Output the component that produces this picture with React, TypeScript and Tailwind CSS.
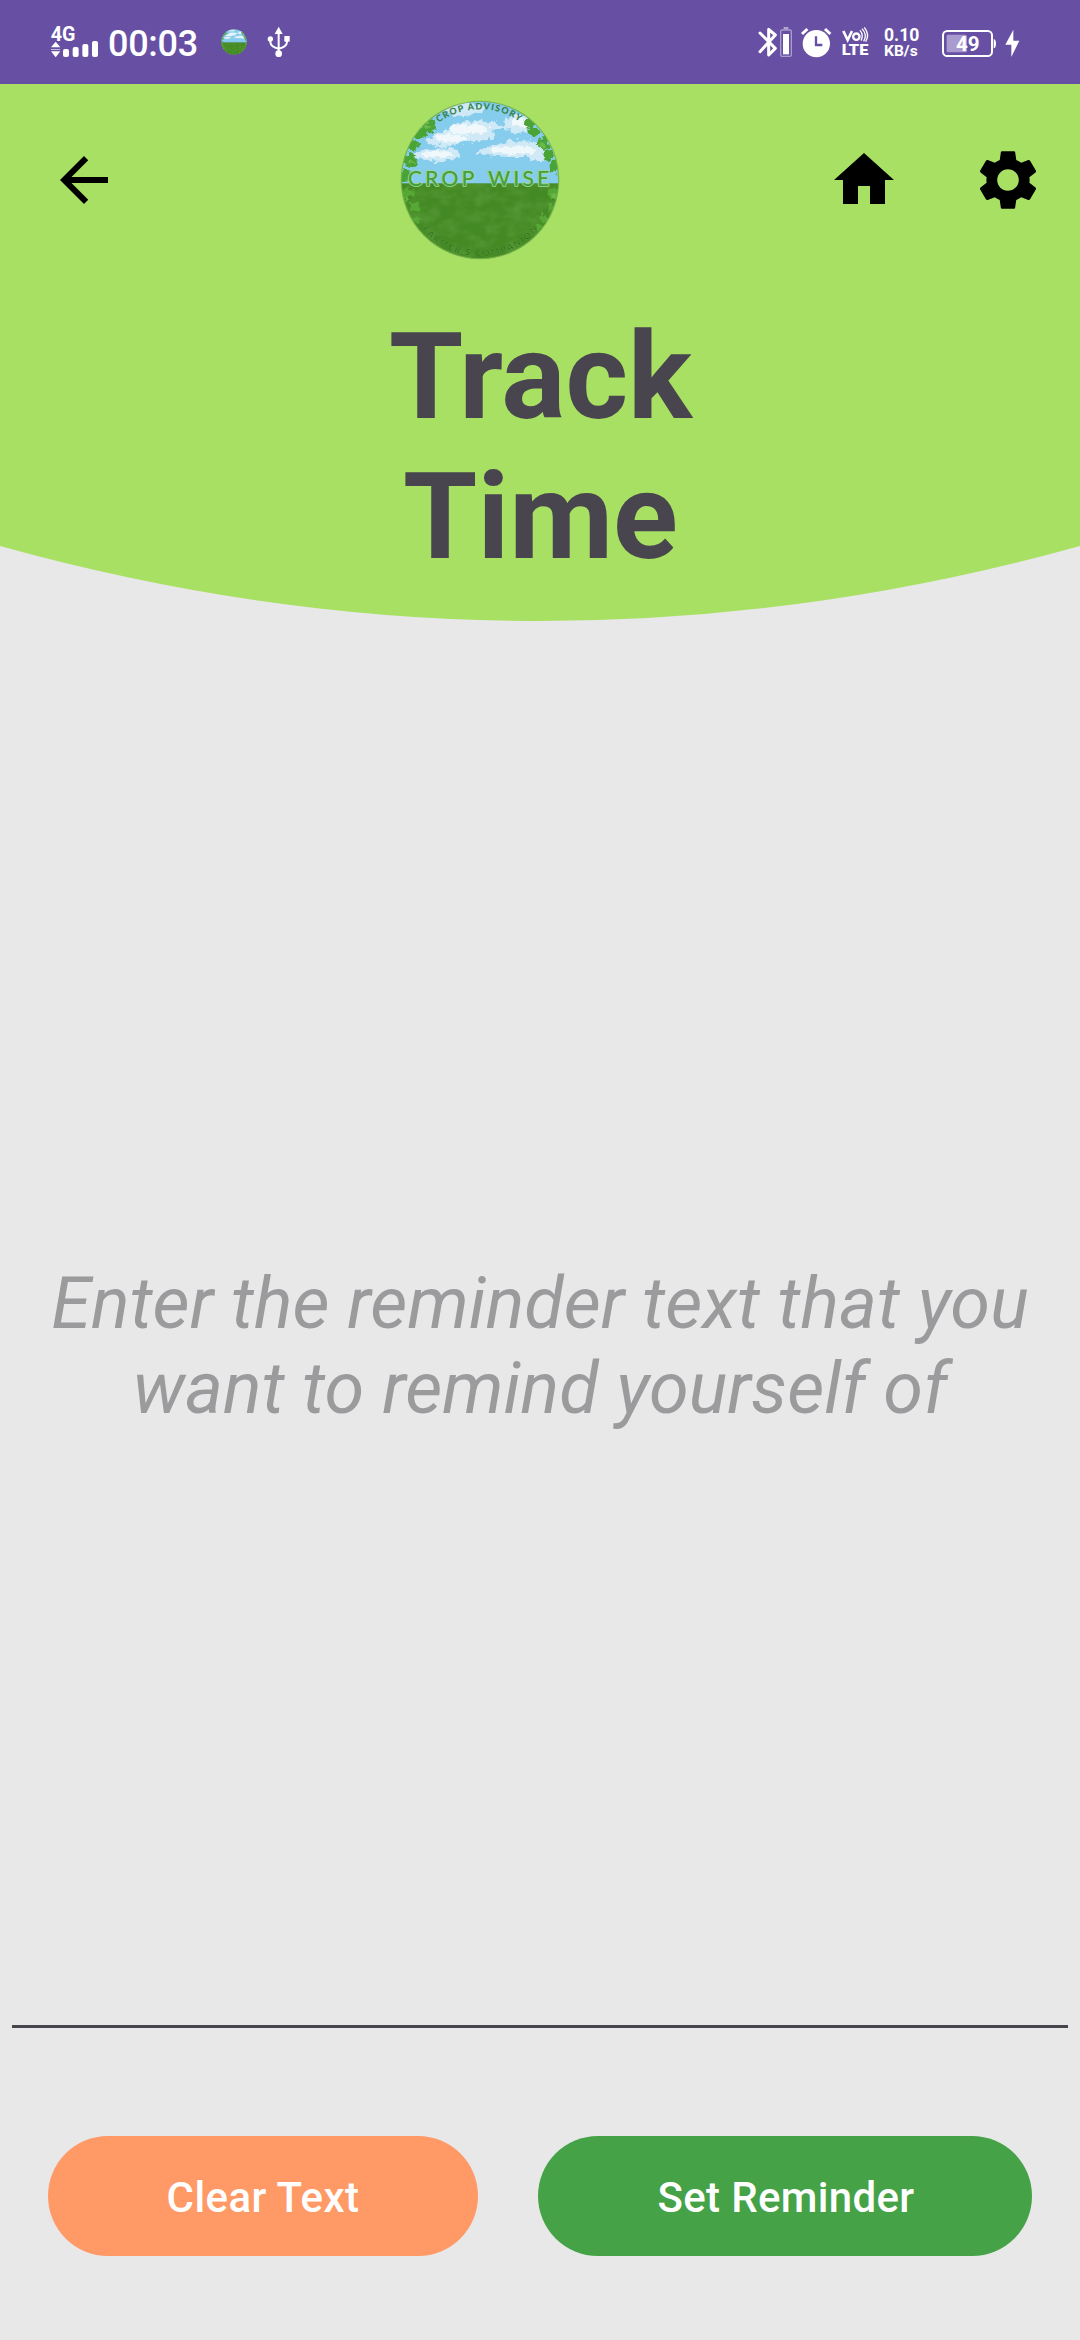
import React from "react";

function CropWiseLogo({ id, className, labelled = false }: { id: string; className: string; labelled?: boolean }) {
  return (
    <svg viewBox="30 30 480 480" className={className}>
      <defs>
        <clipPath id={`${id}-clip`}>
          <circle cx="270" cy="270" r="236" />
        </clipPath>
        <filter id={`${id}-rough`} x="-20%" y="-20%" width="140%" height="140%">
          <feTurbulence type="fractalNoise" baseFrequency="0.06" numOctaves="3" seed="4" />
          <feDisplacementMap in="SourceGraphic" scale="26" xChannelSelector="R" yChannelSelector="G" />
        </filter>
        <filter id={`${id}-grass`} x="0" y="0" width="100%" height="100%">
          <feTurbulence type="fractalNoise" baseFrequency="0.02 0.03" numOctaves="3" seed="8" />
          <feColorMatrix values="0 0 0 0 0.16  0 0 0 0 0.42  0 0 0 0 0.08  1.6 0 0 0 -0.6" />
        </filter>
        <path id={`${id}-top`} d="M57 270a213 212 0 0 1 426 0" />
        <path id={`${id}-bottom`} d="M42 270a228 229 0 0 0 456 0" />
      </defs>
      <g clipPath={`url(#${id}-clip)`}>
        <rect x="30" y="30" width="480" height="252" fill="#86ccec" />
        <g filter={`url(#${id}-rough)`} fill="#cfe9f6">
          <ellipse cx="225" cy="58" rx="60" ry="20" />
          <ellipse cx="385" cy="100" rx="45" ry="28" />
          <path d="M105 150q40-25 75-30 15-28 60-25 50-8 100 10-5 15-35 20 20 15-10 25-50 5-85 12-45 15-75 2-20 0-30-14Z" />
          <path d="M70 195q20-20 60-18 45-6 78 5 5 14-20 25-45 15-70 3-30 0-48-15Z" />
          <path d="M255 188q45-25 85-30 50-14 95 0 45 20 40 52-35 10-60-10-90 4-160-12Z" />
        </g>
        <g filter={`url(#${id}-rough)`} fill="#f0f8fc">
          <ellipse cx="235" cy="118" rx="62" ry="15" />
          <ellipse cx="185" cy="145" rx="50" ry="12" />
          <ellipse cx="145" cy="193" rx="48" ry="10" />
          <ellipse cx="375" cy="180" rx="70" ry="13" />
          <ellipse cx="390" cy="98" rx="25" ry="14" />
        </g>
        <rect x="30" y="280" width="480" height="232" fill="#448a24" />
        <rect x="30" y="282" width="480" height="232" filter={`url(#${id}-grass)`} opacity="0.5" />
        <g filter={`url(#${id}-rough)`}>
          <g fill="#4aa336">
            <circle cx="118" cy="108" r="20" />
            <circle cx="90" cy="130" r="19" />
            <circle cx="66" cy="165" r="18" />
            <circle cx="60" cy="210" r="20" />
            <circle cx="45" cy="258" r="18" />
            <circle cx="420" cy="100" r="18" />
            <circle cx="432" cy="125" r="14" />
            <circle cx="462" cy="160" r="18" />
            <circle cx="475" cy="195" r="18" />
            <circle cx="494" cy="230" r="18" />
          </g>
          <g fill="#57a834">
            <circle cx="52" cy="310" r="17" />
            <circle cx="75" cy="350" r="14" />
            <circle cx="78" cy="390" r="12" />
            <circle cx="490" cy="310" r="16" />
            <circle cx="482" cy="348" r="11" />
            <circle cx="460" cy="385" r="12" />
            <circle cx="445" cy="410" r="9" />
          </g>
          <g fill="#6cb947">
            <circle cx="62" cy="212" r="7" />
            <circle cx="112" cy="106" r="8" />
            <circle cx="458" cy="164" r="8" />
            <circle cx="52" cy="328" r="7" />
            <circle cx="492" cy="318" r="7" />
          </g>
        </g>
      </g>
      <circle cx="270" cy="270" r="236" fill="none" stroke="#6fae4a" strokeWidth="4" opacity="0.8" />
      {labelled && (
        <g fontFamily="Lato, sans-serif" fontWeight="900">
          <text fontSize="27" fill="#35834a" textAnchor="middle">
            <textPath href={`#${id}-top`} startOffset="49.500%" textLength="258">CROP ADVISORY</textPath>
          </text>
          <text fontSize="26" fill="#296a1c" stroke="#64a83f" strokeWidth="1" textAnchor="middle">
            <textPath href={`#${id}-bottom`} startOffset="50%" textLength="394">FARMER'S COMPANION</textPath>
          </text>
          <text
            x="53"
            y="288"
            fontSize="64"
            fontWeight="500"
            wordSpacing="8"
            textLength="425"
            fill="#45a03f"
            stroke="#a4d890"
            strokeWidth="5"
            strokeLinejoin="round"
            paintOrder="stroke"
          >
            CROP WISE
          </text>
        </g>
      )}
    </svg>
  );
}

function SignalIcon() {
  return (
    <svg viewBox="60 78 147 96" className="h-8 w-[49px] overflow-visible" fill="#fff">
      <text x="62" y="124" fontSize="58" fontWeight="700" textLength="74" lengthAdjust="spacingAndGlyphs">4G</text>
      <path d="M77 125l14 17H63ZM77 172l14-18H63Z" />
      <rect x="63" y="147" width="28" height="3" opacity="0.6" />
      <rect x="99" y="147" width="18" height="24" rx="6" />
      <rect x="128" y="141" width="18" height="30" rx="6" />
      <rect x="157" y="132" width="18" height="39" rx="6" />
      <rect x="186" y="123" width="18" height="48" rx="6" />
    </svg>
  );
}

function UsbIcon() {
  return (
    <svg viewBox="711 78 72 96" className="ml-5 h-8 w-6" fill="#fff">
      <path d="M746 80l12 22h-24Z" />
      <circle cx="746" cy="161" r="10" />
      <circle cx="721" cy="117" r="8" />
      <rect x="763" y="108" width="16" height="17" />
      <path d="M746 98v60M721 118v8q1 15 25 20M771 120v6q-1 15-25 20" fill="none" stroke="#fff" strokeWidth="6" />
    </svg>
  );
}

function BluetoothIcon() {
  return (
    <svg viewBox="54 78 105 96" className="h-8 w-[35px]">
      <path d="M60 99l46 46-20 20V88l20 17-46 50" fill="none" stroke="#fff" strokeWidth="9" strokeLinecap="round" strokeLinejoin="round" />
      <rect x="131" y="81" width="14" height="7" fill="#b3a6d2" />
      <rect x="122" y="90" width="32" height="79" rx="4" fill="none" stroke="#a99bcd" strokeWidth="4" />
      <rect x="129" y="102" width="18" height="61" fill="#fff" />
    </svg>
  );
}

function AlarmIcon() {
  return (
    <svg viewBox="180 78 96 96" className="size-8">
      <circle cx="229" cy="131" r="41" fill="#fff" />
      <path d="M186 102l16-15M271 102l-16-15" stroke="#fff" strokeWidth="9" />
      <path d="M228 109v26h19" fill="none" stroke="#6750a4" strokeWidth="7" />
    </svg>
  );
}

function VolteIcon() {
  return (
    <svg viewBox="303 78 84 96" className="h-8 w-7 overflow-visible" fill="#fff">
      <path d="M310 93l13 27 13-27" fill="none" stroke="#fff" strokeWidth="8" />
      <circle cx="349" cy="110" r="9.500" fill="none" stroke="#fff" strokeWidth="7" />
      <path d="M360 91q12 14 3 31M366 86q17 18 5 38M373 82q17 22 4 43" fill="none" stroke="#fff" strokeWidth="4" />
      <text x="305" y="165" fontSize="45" fontWeight="900" textLength="80" lengthAdjust="spacingAndGlyphs">LTE</text>
    </svg>
  );
}

function NetworkSpeed() {
  return (
    <svg viewBox="429 78 111 96" className="h-8 w-[37px] overflow-visible" fill="#fff" fontWeight="700">
      <text x="432" y="123" fontSize="54" textLength="106" lengthAdjust="spacingAndGlyphs">0.10</text>
      <text x="432" y="168" fontSize="43" textLength="101" lengthAdjust="spacingAndGlyphs">KB/s</text>
    </svg>
  );
}

function BatteryIcon() {
  return (
    <svg viewBox="603 84 240 96" className="h-8 w-20">
      <rect x="609" y="93" width="147" height="75" rx="13" fill="none" stroke="#fff" strokeWidth="6" />
      <rect x="620" y="104" width="61" height="53" rx="5" fill="#a99bcd" />
      <path d="M761 117q7 2 7 14t-7 14Z" fill="#fff" />
      <text x="648" y="153" fontSize="60" fontWeight="700" textLength="71" lengthAdjust="spacingAndGlyphs" fill="#fff">49</text>
      <path d="M820 89l-24 45h18v37l24-49h-18Z" fill="#fff" />
    </svg>
  );
}

function StatusBar() {
  return (
    <header className="flex h-[84px] items-center justify-between bg-[#6750a4] pr-[59px] pl-[50px] text-white">
      <div className="flex items-center">
        <SignalIcon />
        <span className="ml-[9px] w-[90px] translate-y-[2px] text-[36px] leading-none font-medium tracking-[-0.3px] whitespace-nowrap">00:03</span>
        <CropWiseLogo id="mini" className="ml-[23px] size-[26px]" />
        <UsbIcon />
      </div>
      <div className="flex items-center">
        <BluetoothIcon />
        <div className="ml-[7px]"><AlarmIcon /></div>
        <div className="ml-[9px]"><VolteIcon /></div>
        <div className="ml-[14px]"><NetworkSpeed /></div>
        <div className="ml-[21px] pt-1"><BatteryIcon /></div>
      </div>
    </header>
  );
}

function TopBar() {
  return (
    <nav className="flex h-48 items-center pl-12">
      <svg viewBox="0 0 24 24" className="size-[72px]">
        <path d="M20 11H7.830l5.590-5.590L12 4l-8 8 8 8 1.410-1.410L7.830 13H20v-2z" />
      </svg>
      <CropWiseLogo id="main" labelled className="ml-[280px] size-40" />
      <svg viewBox="0 0 24 24" className="ml-[268px] size-[72px]">
        <path d="M10 20v-6h4v6h5v-8h3L12 3 2 12h3v8z" />
      </svg>
      <svg viewBox="0 0 24 24" className="ml-[72px] size-[72px]">
        <path d="M19.140,12.940c0.040-0.300,0.060-0.610,0.060-0.940c0-0.320-0.020-0.640-0.070-0.940l2.030-1.580c0.180-0.140,0.230-0.410,0.120-0.610l-1.920-3.320c-0.120-0.220-0.370-0.290-0.590-0.220l-2.390,0.960c-0.500-0.380-1.030-0.700-1.620-0.940L14.400,2.810c-0.040-0.240-0.240-0.410-0.480-0.410h-3.840c-0.240,0-0.430,0.170-0.470,0.410L9.250,5.350C8.660,5.590,8.120,5.920,7.630,6.290L5.240,5.330c-0.220-0.080-0.470,0-0.590,0.220L2.740,8.870C2.620,9.080,2.660,9.340,2.860,9.480l2.030,1.580C4.840,11.360,4.800,11.690,4.800,12s0.020,0.640,0.070,0.940l-2.030,1.580c-0.180,0.140-0.230,0.410-0.120,0.610l1.920,3.320c0.120,0.220,0.370,0.290,0.590,0.220l2.390-0.960c0.500,0.380,1.030,0.700,1.620,0.940l0.360,2.540c0.050,0.240,0.240,0.410,0.480,0.410h3.840c0.240,0,0.440-0.170,0.470-0.410l0.360-2.540c0.590-0.240,1.130-0.560,1.620-0.940l2.390,0.960c0.220,0.080,0.470,0,0.590-0.220l1.920-3.320c0.120-0.220,0.070-0.470-0.120-0.610L19.140,12.940z M12,15.600c-1.980,0-3.600-1.620-3.600-3.600s1.620-3.600,3.600-3.600s3.600,1.620,3.600,3.600S13.980,15.600,12,15.600z" />
      </svg>
    </nav>
  );
}

export default function App() {
  return (
    <div className="flex h-[2340px] w-[1080px] flex-col overflow-hidden bg-[#e8e8e8] font-[Roboto,sans-serif]">
      <StatusBar />
      <section className="relative h-[537px] shrink-0">
        <svg viewBox="0 0 1080 537" className="absolute inset-0 h-full w-full">
          <path d="M0 0H1080V462Q540 612 0 462Z" fill="#a8e063" />
        </svg>
        <div className="relative">
          <TopBar />
          <h1 className="mt-[31px] pl-px text-center text-[120px] leading-[140px] font-bold text-[#49454f]">
            Track
            <br />
            Time
          </h1>
        </div>
      </section>
      <main className="mx-3 flex h-[1407px] shrink-0 flex-col items-center justify-center border-b-[3px] border-[#49454f] pt-[46px] text-center text-[72px] leading-[85px] tracking-[0.05px] whitespace-nowrap text-[#9b9b9d] italic">
        <p>Enter the reminder text that you</p>
        <p>want to remind yourself of</p>
      </main>
      <footer className="mt-[108px] flex gap-[60px] px-12 text-[42px] font-medium text-white">
        <button className="h-[120px] w-[430px] rounded-full bg-[#ff9966] pt-[2px] tracking-[0.4px]">Clear Text</button>
        <button className="h-[120px] flex-1 rounded-full bg-[#45a247] pt-[2px] pl-[2px] tracking-[0.35px]">Set Reminder</button>
      </footer>
    </div>
  );
}
